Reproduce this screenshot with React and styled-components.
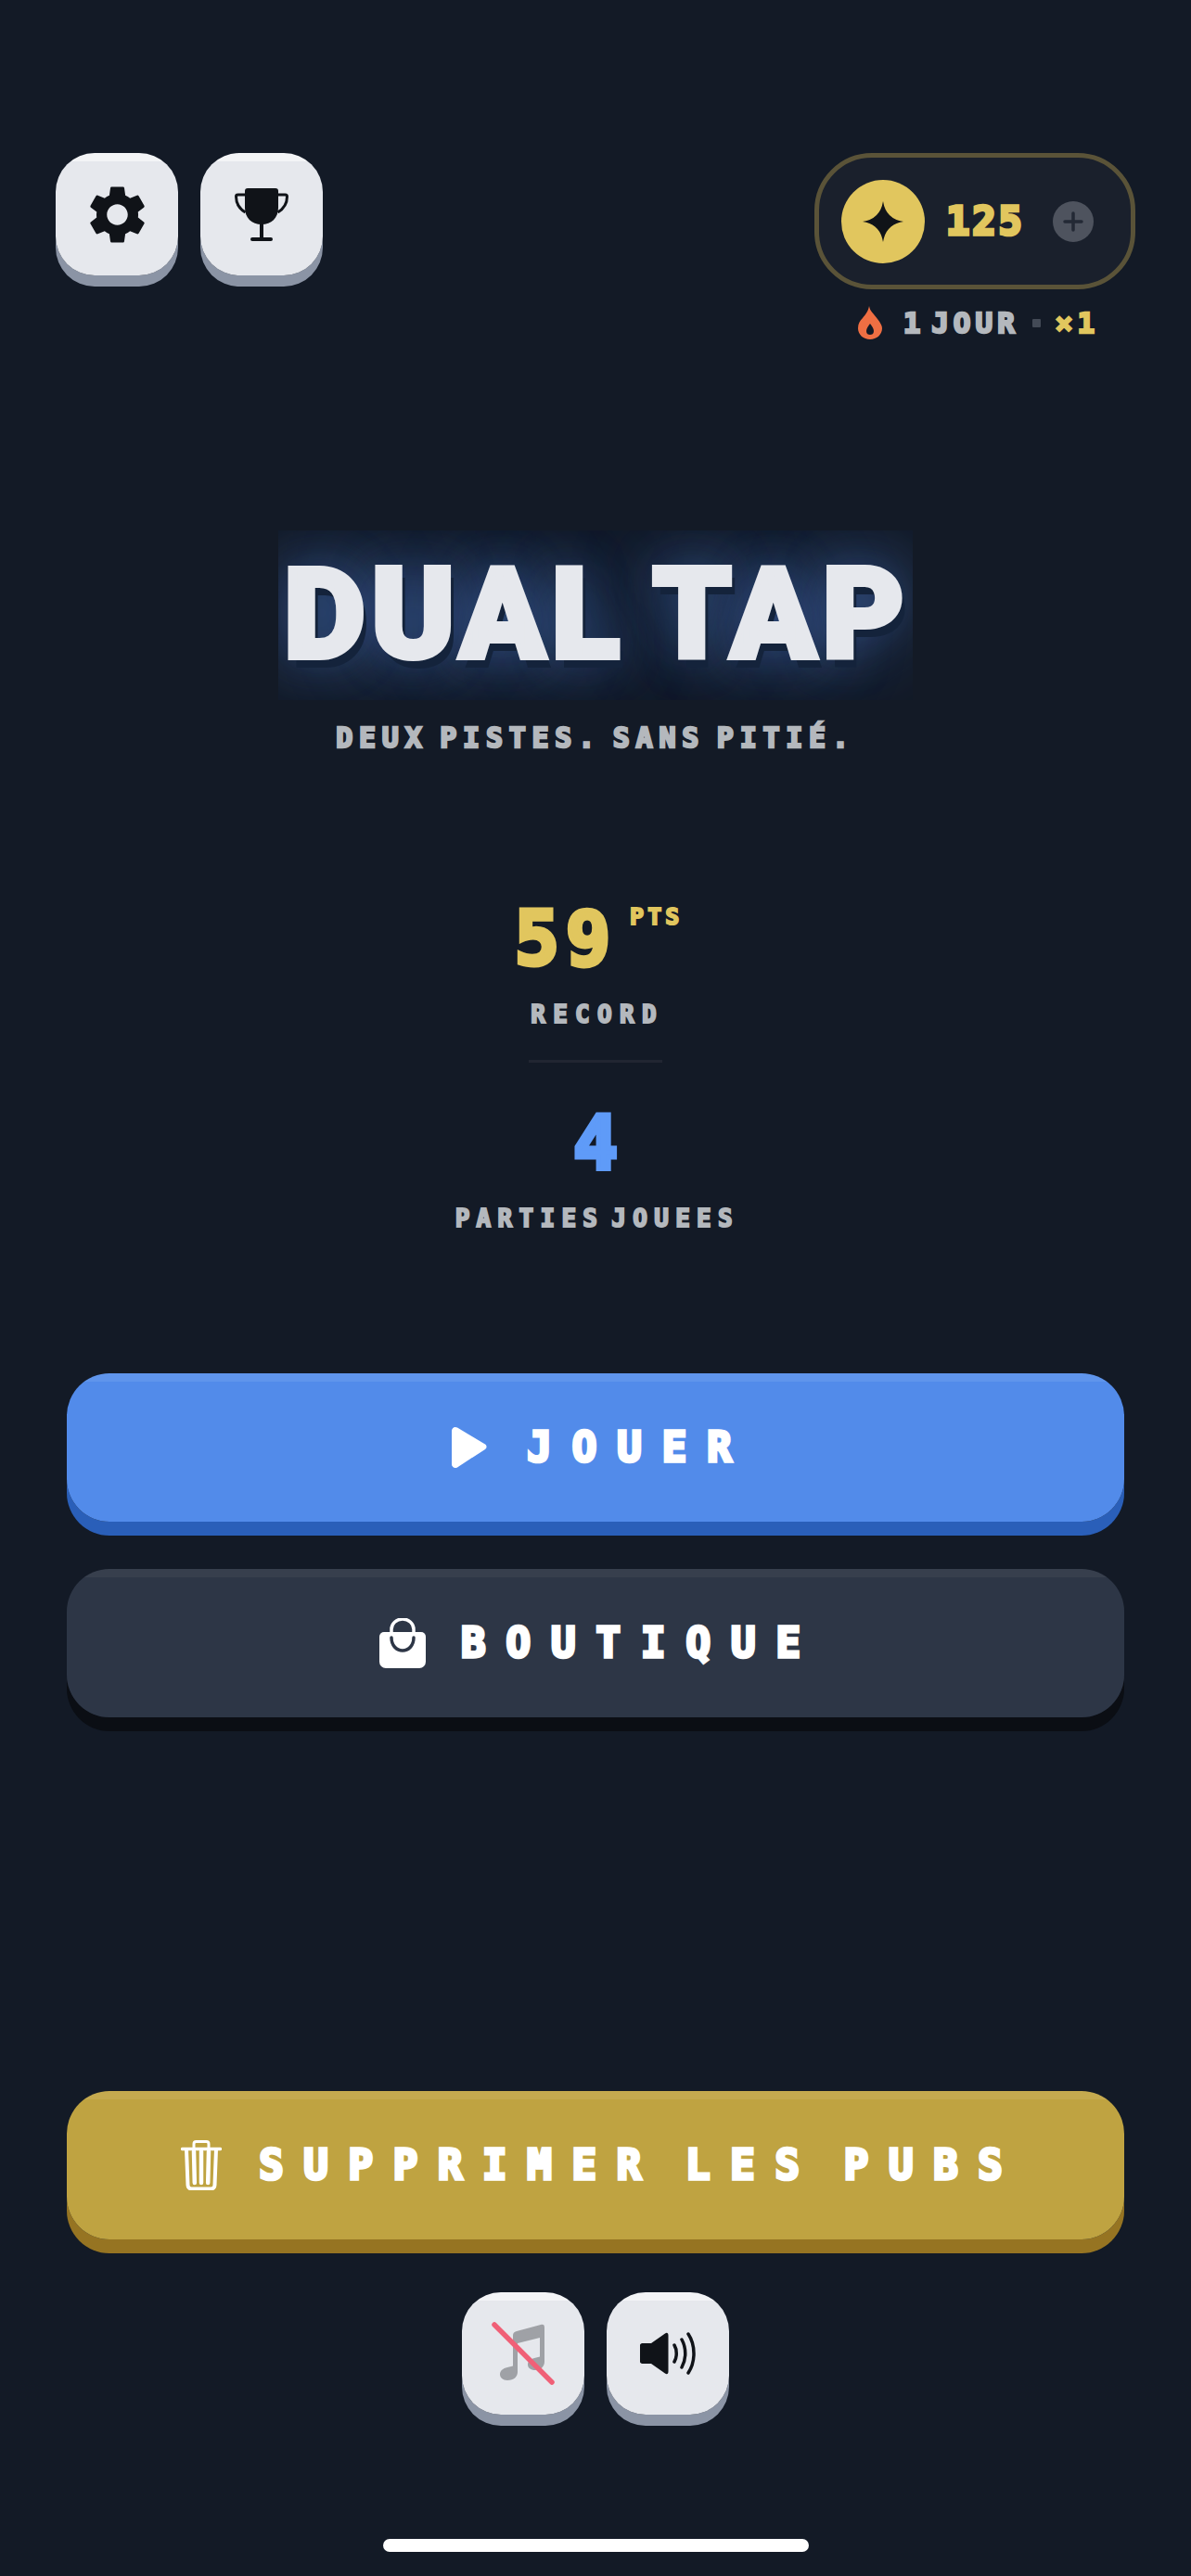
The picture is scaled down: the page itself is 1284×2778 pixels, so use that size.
import React from 'react';
import styled, { createGlobalStyle } from 'styled-components';
import { MdSettings } from 'react-icons/md';

const GlobalStyle = createGlobalStyle`
  html, body {
    margin: 0;
    padding: 0;
    background: #131a26;
  }
`

const FONT = `"DejaVu Sans Mono", "Liberation Mono", monospace`

const Page = styled.div`
  width: 1284px;
  height: 2778px;
  box-sizing: border-box;
  padding-top: 165px;
  background: #131a26;
  display: flex;
  flex-direction: column;
  align-items: center;
  overflow: hidden;
  font-family: ${FONT};
  font-weight: 700;
`

const TopBar = styled.header`
  width: 100%;
  box-sizing: border-box;
  padding: 0 60px;
  display: flex;
  justify-content: space-between;
  align-items: flex-start;
`

const IconGroup = styled.div`
  display: flex;
  gap: 24px;
`

const IconButton = styled.button`
  width: 132px;
  height: 132px;
  padding: 0;
  border: 0;
  border-radius: 42px;
  background: linear-gradient(#f3f4f6 9px, #e6e8ed 9px);
  box-shadow: 0 12px 0 #8b94a5;
  display: flex;
  align-items: center;
  justify-content: center;
  color: #101318;
`

const WalletColumn = styled.div`
  display: flex;
  flex-direction: column;
  align-items: center;
`

const CoinPill = styled.div`
  width: 346px;
  height: 147px;
  box-sizing: border-box;
  border: 5px solid #5a5338;
  border-radius: 62px;
  background: #1a202c;
  padding: 0 40px 0 24px;
  display: flex;
  align-items: center;
`

const Coin = styled.div`
  width: 90px;
  height: 90px;
  border-radius: 50%;
  background: #e1c65e;
  display: flex;
  align-items: center;
  justify-content: center;
`

const CoinCount = styled.span`
  margin-left: 23px;
  flex: 1;
  font-size: 42px;
  line-height: 60px;
  letter-spacing: 3px;
  color: #e1c65e;
  -webkit-text-stroke: 3.5px #e1c65e;
`

const PlusBadge = styled.div`
  width: 44px;
  height: 44px;
  border-radius: 50%;
  background: #4e535e;
  display: flex;
  align-items: center;
  justify-content: center;
`

const Streak = styled.div`
  margin: 16px 0 0 7px;
  display: flex;
  align-items: center;
  height: 40px;
`

const StreakText = styled.span`
  margin-left: ${p => p.$left || 0}px;
  font-size: 31px;
  line-height: 40px;
  letter-spacing: 5px;
  word-spacing: -17px;
  color: ${p => p.$color};
  -webkit-text-stroke: 2.5px ${p => p.$color};
`

const StreakDot = styled.i`
  width: 9px;
  height: 9px;
  margin: 0 16px 0 14px;
  background: #434a56;
  border-radius: 1px;
`

const Title = styled.h1`
  margin: 204px 0 0;
  width: 684px;
  height: 183px;
  box-sizing: border-box;
  padding-left: 4px;
  overflow: hidden;
  text-align: center;
  font-family: Roboto, "Liberation Sans", sans-serif;
  font-weight: 900;
  font-size: 135px;
  line-height: 183px;
  letter-spacing: 7px;
  word-spacing: -8px;
  white-space: nowrap;
  color: #e6e8ed;
  -webkit-text-stroke: 6px #e6e8ed;
  text-shadow: 6px 11px 0 #14233b, 0 0 50px rgba(85, 135, 225, 0.4), 0 0 90px rgba(85, 135, 225, 0.4), 0 0 120px rgba(85, 135, 225, 0.3);
`

const Tagline = styled.p`
  margin: 21px 0 0;
  font-size: 30px;
  line-height: 40px;
  letter-spacing: 6.75px;
  word-spacing: -12px;
  color: #b4b8bd;
  -webkit-text-stroke: 2.5px #b4b8bd;
`

const ScoreRow = styled.div`
  margin: 157px 0 0 7px;
  display: flex;
  gap: 14px;
  align-items: flex-start;
`

const BigNumber = styled.div`
  font-size: 80px;
  line-height: 80px;
  letter-spacing: ${p => p.$spacing || 0}px;
  color: ${p => p.$color};
  -webkit-text-stroke: 5px ${p => p.$color};
`

const Unit = styled.span`
  font-size: 25px;
  line-height: 32px;
  letter-spacing: 4px;
  color: #e1c65e;
  -webkit-text-stroke: 2px #e1c65e;
`

const StatLabel = styled.div`
  margin-top: ${p => p.$top}px;
  font-size: 26px;
  line-height: 30px;
  letter-spacing: ${p => p.$spacing}px;
  word-spacing: -15px;
  text-indent: ${p => p.$spacing / 2}px;
  color: #b4b8bd;
  -webkit-text-stroke: 2px #b4b8bd;
`

const Divider = styled.div`
  margin: 34px 0 48px;
  width: 144px;
  height: 3px;
  background: #212632;
`

const ActionButton = styled.button`
  width: 1140px;
  height: 160px;
  flex: none;
  padding: 0 ${p => p.$nudge}px 0 0;
  border: 0;
  border-radius: 46px;
  background: linear-gradient(${p => p.$shine} 9px, ${p => p.$face} 9px);
  box-shadow: 0 15px 0 ${p => p.$edge};
  display: flex;
  align-items: center;
  justify-content: center;
  gap: ${p => p.$gap}px;
  color: #ffffff;
  font-family: ${FONT};
  font-weight: 700;
`

const ActionLabel = styled.span`
  font-size: 44px;
  line-height: 60px;
  letter-spacing: ${p => p.$spacing}px;
  word-spacing: ${p => p.$word || 0}px;
  margin-right: -${p => p.$spacing}px;
  -webkit-text-stroke: 3.5px #ffffff;
`

const PlayButton = styled(ActionButton)`
  margin-top: 152px;
`

const ShopButton = styled(ActionButton)`
  margin-top: 51px;
`

const RemoveAdsButton = styled(ActionButton)`
  margin-top: auto;
`

const SoundRow = styled.div`
  margin-top: 57px;
  display: flex;
  gap: 24px;
`

const HomeBar = styled.div`
  margin: 134px 0 26px;
  width: 459px;
  height: 14px;
  border-radius: 7px;
  background: #ffffff;
`

const Trophy = () => (
  <svg width="58" height="58" viewBox="0 0 58 58" fill="none">
    <path d="M14 1h30a3 3 0 0 1 3 3V22c0 11-7.500 18-18 18S11 33 11 22V4a3 3 0 0 1 3-3z" fill="currentColor" />
    <path d="M11 8H3.500C2.500 8 1.500 8.500 1.500 10c0 7 3.500 13 10 17M47 8h7.500c1 0 2 .5 2 2 0 7-3.500 13-10 17" stroke="currentColor" strokeWidth="3" />
    <rect x="27" y="38" width="4" height="17" fill="currentColor" />
    <rect x="17" y="54" width="24" height="4" rx="2" fill="currentColor" />
  </svg>
)

const Sparkle = () => (
  <svg width="44" height="44" viewBox="0 0 44 44">
    <path d="M22 0Q25 19 44 22 25 25 22 44 19 25 0 22 19 19 22 0z" fill="#101318" />
  </svg>
)

const Plus = () => (
  <svg width="22" height="22" viewBox="0 0 22 22">
    <path d="M11 2v18M2 11h18" stroke="#232935" strokeWidth="3.500" strokeLinecap="round" />
  </svg>
)

const Flame = () => (
  <svg width="28" height="38" viewBox="0 0 28 38">
    <path d="M13 1c1 6 5 8 9 14 3 4 5 7 5 10 0 7-6 12-13 12S1 32 1 25c0-5 2-8 5-11 3-4 6-7 7-13z" fill="#ef6f43" />
    <path d="M14 20c2 3 4 5 4 8 0 3-2 4-4 4s-4-1-4-4c0-3 2-5 4-8z" fill="#131a26" />
  </svg>
)

const Play = () => (
  <svg width="38" height="44" viewBox="0 0 38 44">
    <path d="M0 4C0 1 3-1 6 .6l30 18c2 1.300 2 4 0 5.300l-30 19.500C3 45 0 43 0 40z" fill="#ffffff" />
  </svg>
)

const Bag = () => (
  <svg width="50" height="54" viewBox="0 0 50 54">
    <path d="M13 16V12a12 11 0 0 1 24 0v4" fill="none" stroke="#ffffff" strokeWidth="3.500" />
    <path d="M5 15h40a5 5 0 0 1 5 5v27a7 7 0 0 1-7 7H7a7 7 0 0 1-7-7V20a5 5 0 0 1 5-5z" fill="#ffffff" />
    <path d="M13 21c0 8 5 14 12 14s12-6 12-14" fill="none" stroke="#2d3646" strokeWidth="3.500" strokeLinecap="round" />
  </svg>
)

const Trash = () => (
  <svg width="44" height="54" viewBox="0 0 44 54" fill="none" stroke="#ffffff" strokeLinecap="round">
    <path d="M1.500 9.500h41" strokeWidth="3.500" />
    <path d="M14 9V4a2.500 2.500 0 0 1 2.500-2.500h11A2.500 2.500 0 0 1 30 4v5" strokeWidth="3" />
    <path d="M6 10l1.500 38.500a4 4 0 0 0 4 4h21a4 4 0 0 0 4-4L38 10" strokeWidth="4" />
    <path d="M14 12l.8 34M22 12v34M30 12l-.8 34" strokeWidth="4.500" />
  </svg>
)

const MutedMusic = () => (
  <svg width="68" height="68" viewBox="0 0 68 68" fill="none">
    <path d="M23 15c0-3 1-4 4-5l26-7c3-.8 4 .5 4 3v37c0 5-4 9-10 9-5 0-8-2.500-8-6s3-6 7-7l6-1.500V17l-24 6v31c0 5-4 9-11 9-5 0-8-3-8-6.500S12 50 17 49l6-1.500z" fill="#9fa1a6" />
    <path d="M3 3l62 62" stroke="#f06077" strokeWidth="5.500" strokeLinecap="round" />
  </svg>
)

const Speaker = () => (
  <svg width="60" height="46" viewBox="0 0 60 46" fill="none">
    <path d="M3 12h9L27 1.500c2-1.500 3.500-.5 3.500 2v39c0 2.500-1.500 3.500-3.500 2L12 34H3a2.500 2.500 0 0 1-3-3V15a2.500 2.500 0 0 1 3-3z" fill="#101318" />
    <path d="M37 14c3 5 3 13 0 18M45 8c5 9 5 21 0 30M52 2c8 12 8 30 0 42" stroke="#101318" strokeWidth="3.500" strokeLinecap="round" />
  </svg>
)

function App () {
  return (
    <Page>
      <GlobalStyle />
      <TopBar>
        <IconGroup>
          <IconButton><MdSettings size={75} /></IconButton>
          <IconButton><Trophy /></IconButton>
        </IconGroup>
        <WalletColumn>
          <CoinPill>
            <Coin><Sparkle /></Coin>
            <CoinCount>125</CoinCount>
            <PlusBadge><Plus /></PlusBadge>
          </CoinPill>
          <Streak>
            <Flame />
            <StreakText $color="#b4b8bd" $left={22}>1 JOUR</StreakText>
            <StreakDot />
            <StreakText $color="#e1c65e">×1</StreakText>
          </Streak>
        </WalletColumn>
      </TopBar>

      <Title>DUAL TAP</Title>
      <Tagline>DEUX PISTES. SANS PITIÉ.</Tagline>

      <ScoreRow>
        <BigNumber $color="#e1c65e" $spacing={7}>59</BigNumber>
        <Unit>PTS</Unit>
      </ScoreRow>
      <StatLabel $top={26} $spacing={8.3}>RECORD</StatLabel>
      <Divider />
      <BigNumber $color="#5f9bf8">4</BigNumber>
      <StatLabel $top={25} $spacing={7.3}>PARTIES JOUEES</StatLabel>

      <PlayButton $face="#528bea" $edge="#2a5fb9" $shine="#5f95ec" $gap={43} $nudge={8}>
        <Play />
        <ActionLabel $spacing={22}>JOUER</ActionLabel>
      </PlayButton>
      <ShopButton $face="#2d3646" $edge="#0b0e14" $shine="#373f4d" $gap={38} $nudge={12}>
        <Bag />
        <ActionLabel $spacing={22}>BOUTIQUE</ActionLabel>
      </ShopButton>

      <RemoveAdsButton $face="#bfa341" $edge="#967422" $shine="#c5aa4f" $gap={40} $nudge={8}>
        <Trash />
        <ActionLabel $spacing={21.7} $word={-22}>SUPPRIMER LES PUBS</ActionLabel>
      </RemoveAdsButton>

      <SoundRow>
        <IconButton><MutedMusic /></IconButton>
        <IconButton><Speaker /></IconButton>
      </SoundRow>
      <HomeBar />
    </Page>
  )
}

export default App
